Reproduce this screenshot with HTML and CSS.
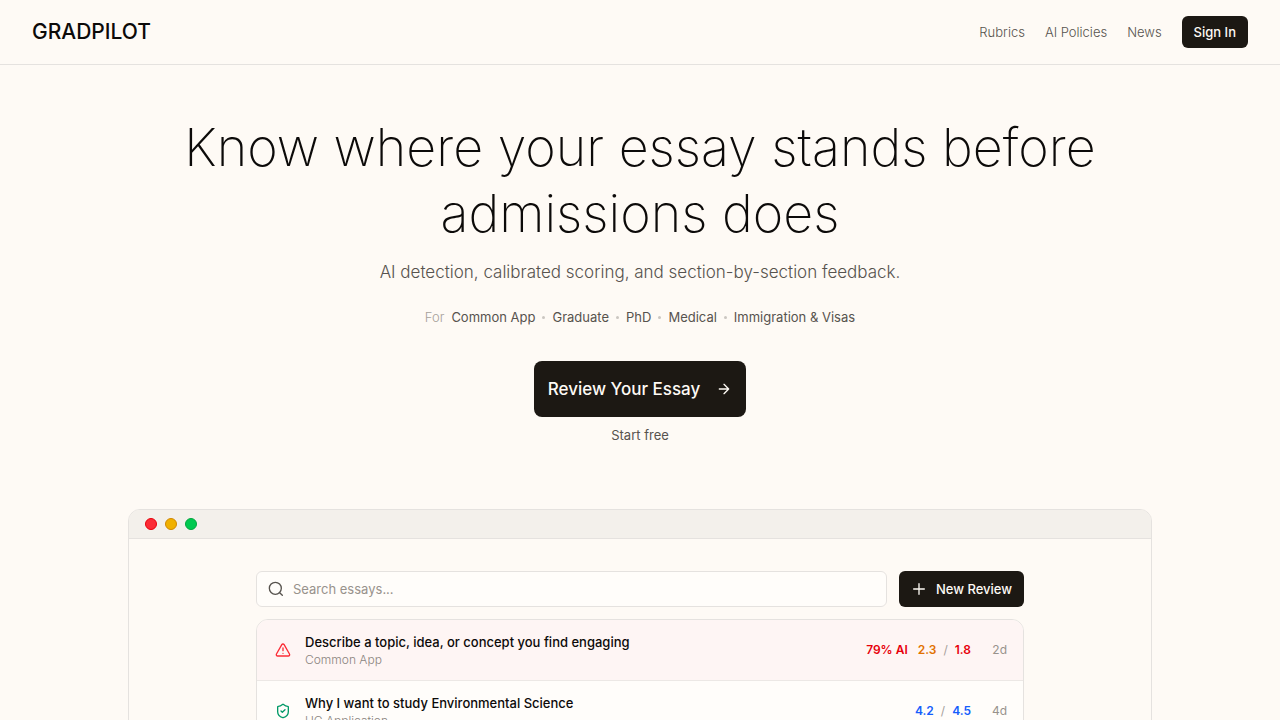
FILE: index.html
```html
<!DOCTYPE html>
<html lang="en">
<head>
<meta charset="utf-8">
<meta name="viewport" content="width=device-width, initial-scale=1">
<title>GradPilot</title>
<link rel="stylesheet" href="styles.css">
</head>
<body>
<header class="header">
  <a class="logo" href="#">GRADPILOT</a>
  <nav class="nav">
    <a class="nav-link" href="#">Rubrics</a>
    <a class="nav-link" href="#">AI Policies</a>
    <a class="nav-link" href="#">News</a>
    <button class="button sign-in" type="button">Sign In</button>
  </nav>
</header>
<main class="main">
  <section class="hero">
    <h1 class="title">Know where your essay stands before admissions does</h1>
    <p class="subtitle">AI detection, calibrated scoring, and section-by-section feedback.</p>
    <div class="audience">
      <span class="audience-label">For</span>
      <a class="audience-link" href="#">Common App</a><span class="dot"></span>
      <a class="audience-link" href="#">Graduate</a><span class="dot"></span>
      <a class="audience-link" href="#">PhD</a><span class="dot"></span>
      <a class="audience-link" href="#">Medical</a><span class="dot"></span>
      <a class="audience-link" href="#">Immigration &amp; Visas</a>
    </div>
    <button class="button cta" type="button">Review Your Essay
      <svg class="icon" viewBox="0 0 24 24" aria-hidden="true"><path d="M5 12h14M12 5l7 7-7 7"/></svg>
    </button>
    <p class="note">Start free</p>
  </section>
  <section class="window">
    <div class="window-bar">
      <span class="light light-red"></span>
      <span class="light light-yellow"></span>
      <span class="light light-green"></span>
    </div>
    <div class="window-body">
      <div class="toolbar">
        <label class="search">
          <svg class="icon" viewBox="0 0 24 24" aria-hidden="true"><circle cx="11" cy="11" r="9"/><path d="m21.500 21.500-4-4"/></svg>
          <input class="search-input" type="text" placeholder="Search essays..." aria-label="Search essays">
        </label>
        <button class="button new-review" type="button">
          <svg class="icon" viewBox="0 0 24 24" aria-hidden="true"><path d="M4 12h16M12 4v16"/></svg>
          New Review
        </button>
      </div>
      <ul class="essays">
        <li class="essay essay-flagged">
          <svg class="icon status-alert" viewBox="0 0 24 24" aria-hidden="true"><path d="m21.700 18-8-14a2 2 0 0 0-3.500 0l-8 14A2 2 0 0 0 4 21h16a2 2 0 0 0 1.700-3M12 9v4M12 17h.01"/></svg>
          <div class="essay-text">
            <div class="essay-title">Describe a topic, idea, or concept you find engaging</div>
            <div class="essay-type">Common App</div>
          </div>
          <span class="ai-score">79% AI</span>
          <div class="scores"><span class="score-amber">2.3</span><span class="slash">/</span><span class="score-red">1.8</span></div>
          <span class="age">2d</span>
        </li>
        <li class="essay">
          <svg class="icon status-ok" viewBox="0 0 24 24" aria-hidden="true"><path d="M20 13c0 5-3.500 7.500-7.660 8.950a1 1 0 0 1-.67-.01C7.500 20.500 4 18 4 13V6a1 1 0 0 1 1-1c2 0 4.500-1.200 6.240-2.720a1.170 1.170 0 0 1 1.520 0C14.510 3.810 17 5 19 5a1 1 0 0 1 1 1zM9 12l2 2 4-4"/></svg>
          <div class="essay-text">
            <div class="essay-title">Why I want to study Environmental Science</div>
            <div class="essay-type">UC Application</div>
          </div>
          <div class="scores"><span class="score-blue">4.2</span><span class="slash">/</span><span class="score-blue">4.5</span></div>
          <span class="age">4d</span>
        </li>
      </ul>
    </div>
  </section>
</main>
</body>
</html>
```
FILE: styles.css
```css
* { box-sizing: border-box; }

html { scrollbar-width: none; }

body {
  margin: 0;
  background: #fefaf5;
  color: #0c0a09;
  font-family: Inter, "Liberation Sans", sans-serif;
  font-size: 14px;
  line-height: 20px;
}

a { color: inherit; text-decoration: none; }
h1, p, ul { margin: 0; padding: 0; }

.icon {
  width: 16px;
  height: 16px;
  flex: none;
  fill: none;
  stroke: currentColor;
  stroke-width: 2;
  stroke-linecap: round;
  stroke-linejoin: round;
}

.button {
  display: inline-flex;
  align-items: center;
  justify-content: center;
  border: 0;
  border-radius: 6px;
  background: #1c1813;
  color: #fefaf5;
  font: inherit;
  font-weight: 500;
  white-space: nowrap;
}

.header {
  display: flex;
  align-items: center;
  justify-content: space-between;
  padding: 16px 32px;
  border-bottom: 1px solid #e5e2df;
}

.logo { font-size: 21px; line-height: 28px; font-weight: 500; }
.nav { display: flex; align-items: center; gap: 20px; color: #57534e; }
.nav-link { font-size: 13px; font-weight: 300; }
.sign-in { height: 32px; padding: 0 12px; font-size: 13px; }

.main { padding: 50px 32px 48px; }

.hero {
  display: flex;
  flex-direction: column;
  align-items: center;
  text-align: center;
}

.title {
  max-width: 960px;
  font-size: 52px;
  line-height: 66px;
  font-weight: 200;
}

.subtitle { margin-top: 11px; font-size: 17px; line-height: 28px; font-weight: 300; color: #57534e; }

.audience {
  display: flex;
  align-items: center;
  gap: 7px;
  margin-top: 21px;
  font-size: 13px;
  color: #57534e;
}

.audience-label { color: #a6a09b; font-weight: 300; }
.dot { width: 3px; height: 3px; border-radius: 50%; background: #cbc6c1; }

.cta {
  gap: 16px;
  height: 56px;
  margin-top: 34px;
  padding: 0 14px;
  border-radius: 8px;
  font-size: 17px;
}

.note { margin-top: 8px; font-size: 13px; color: #57534e; }

.window {
  max-width: 1024px;
  margin: 64px auto 0;
  border: 1px solid #e5e2df;
  border-radius: 12px;
  overflow: hidden;
}

.window-bar {
  display: flex;
  gap: 8px;
  padding: 8px 16px;
  border-bottom: 1px solid #e5e2df;
  background: #f3f0eb;
}

.light { width: 12px; height: 12px; border: 1px solid; border-radius: 50%; }
.light-red { background: #fb2c36; border-color: #e7000b; }
.light-yellow { background: #f0b100; border-color: #d08700; }
.light-green { background: #00c950; border-color: #00a63e; }

.window-body { max-width: 768px; margin: 0 auto; padding: 32px 0; }
.toolbar { display: flex; gap: 12px; }

.search {
  display: flex;
  flex: 1;
  align-items: center;
  gap: 9px;
  height: 36px;
  padding: 0 11px;
  border: 1px solid #e5e2df;
  border-radius: 6px;
  background: #fffdfa;
  color: #57534e;
}

.search-input {
  flex: 1;
  min-width: 0;
  padding: 0;
  border: 0;
  outline: 0;
  background: transparent;
  color: inherit;
  font: inherit;
  font-size: 13px;
}

.search-input::placeholder { color: #98928c; opacity: 1; }
.new-review { gap: 9px; padding: 0 12px; font-size: 13px; }

.essays {
  margin-top: 12px;
  border: 1px solid #e5e2df;
  border-radius: 12px;
  overflow: hidden;
  background: #fffdfa;
  list-style: none;
}

.essay {
  display: flex;
  align-items: center;
  padding: 12px 16px 12px 18px;
  border-bottom: 1px solid #ece8e5;
}

.essay:last-child { border-bottom: 0; }
.essay-flagged { background: #fef5f4; }
.status-alert { color: #fb2c36; }
.status-ok { color: #009966; }
.essay-text { flex: 1; min-width: 0; margin-left: 14px; }
.essay-title { font-size: 13px; font-weight: 500; }
.essay-type { font-size: 12px; line-height: 16px; font-weight: 300; color: #8a847e; }

.ai-score, .scores { font-size: 12px; font-weight: 600; }
.ai-score, .score-red { color: #e7000b; }
.scores { display: flex; gap: 7px; margin-left: 10px; }
.score-amber { color: #e17100; }
.score-blue { color: #155dfc; }
.slash { color: #a6a09b; font-weight: 400; }
.age { width: 36px; font-size: 12px; text-align: right; color: #98928c; }
```
